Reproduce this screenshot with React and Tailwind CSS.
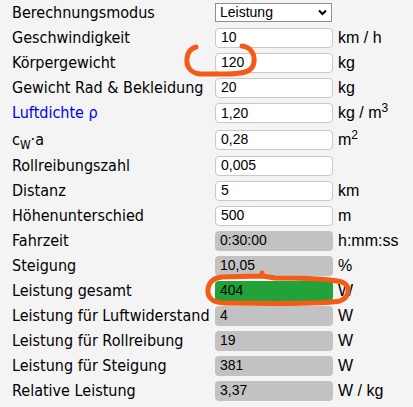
import React from "react";

const rows = [
  { label: "Geschwindigkeit", value: "10", unit: "km / h" },
  { label: "Körpergewicht", value: "120", unit: "kg" },
  { label: "Gewicht Rad & Bekleidung", value: "20", unit: "kg" },
  { label: "Luftdichte ρ", value: "1,20", unit: "kgm3", blue: true, h: "h-[26px]" },
  { label: "cwa", value: "0,28", unit: "m2", h: "h-[27px]" },
  { label: "Rollreibungszahl", value: "0,005", unit: "" },
  { label: "Distanz", value: "5", unit: "km" },
  { label: "Höhenunterschied", value: "500", unit: "m" },
  { label: "Fahrzeit", value: "0:30:00", unit: "h:mm:ss", ro: true },
  { label: "Steigung", value: "10,05", unit: "%", ro: true },
  { label: "Leistung gesamt", value: "404", unit: "W", ro: true, green: true },
  { label: "Leistung für Luftwiderstand", value: "4", unit: "W", ro: true },
  { label: "Leistung für Rollreibung", value: "19", unit: "W", ro: true },
  { label: "Leistung für Steigung", value: "381", unit: "W", ro: true },
  { label: "Relative Leistung", value: "3,37", unit: "W / kg", ro: true },
];

const labelFont = "font-['DejaVu_Sans_Condensed','DejaVu_Sans',sans-serif]";
const inFont = "font-['Liberation_Sans',Arial,sans-serif]";

function Label({ r }) {
  if (r.label === "cwa") {
    return (
      <span>
        c<span className="relative top-[4px] text-[12px]">W</span>·a
      </span>
    );
  }
  return <span className={r.blue ? "text-[#0000ee]" : ""}>{r.label}</span>;
}

function Unit({ u }) {
  if (u === "kgm3")
    return (
      <span>
        kg / m<span className="relative top-[-6px] text-[12px]">3</span>
      </span>
    );
  if (u === "m2")
    return (
      <span>
        m<span className="relative top-[-6px] text-[12px]">2</span>
      </span>
    );
  return <span>{u}</span>;
}

export default function App() {
  return (
    <div className="relative w-[413px] h-[407px] bg-[#f4f4f4] text-black overflow-hidden">
      <div className="flex flex-col pl-[12px]">
        <div className="flex items-center h-[25px]">
          <div className={`w-[203px] text-[16px] ${labelFont}`}>Berechnungsmodus</div>
          <div className={`relative w-[117px] h-[19px] bg-white border border-[#8f8f8f] flex items-center pl-[4px] text-[14px] ${inFont}`}>
            Leistung
            <svg className="absolute right-[4px] top-[5px]" width="9" height="7" viewBox="0 0 9 7">
              <path d="M1 1.5 L4.5 5 L8 1.5" stroke="#000" strokeWidth="2" fill="none" />
            </svg>
          </div>
        </div>
        {rows.map((r, i) => (
          <div key={i} className={`flex items-center ${r.h || "h-[25px]"}`}>
            <div className={`w-[203px] text-[16px] whitespace-nowrap ${labelFont}`}>
              <Label r={r} />
            </div>
            <div
              className={`w-[118px] h-[20px] rounded-[4px] flex items-center pl-[5px] text-[14px] ${inFont} ${
                r.green
                  ? "bg-[#22a33a]"
                  : r.ro
                  ? "bg-[#c2c2c2]"
                  : "bg-white border border-[#c8c8c8]"
              }`}
            >
              {r.value}
            </div>
            <div className={`ml-[5px] text-[16px] whitespace-nowrap ${inFont}`}>
              <Unit u={r.unit} />
            </div>
          </div>
        ))}
      </div>
      <svg className="absolute left-0 top-0 pointer-events-none" width="413" height="407" viewBox="0 0 413 407">
        <path
          d="M242 46 C250 47 255 53 254 62 C253 71 246 74 225 74 L200 74 C190 73 186 66 187 58 C188 51 192 48 196 47"
          stroke="#f45b16"
          strokeWidth="5"
          fill="none"
          strokeLinecap="round"
        />
        <path
          d="M262 276 L275 278 C300 278 330 279 342 282 C351 286 350 297 340 301 C320 305 260 303 225 303 C212 303 207 297 208 289 C209 281 214 278 222 277 L262 276 L262 273"
          stroke="#f45b16"
          strokeWidth="5"
          fill="none"
          strokeLinecap="round"
          strokeLinejoin="round"
        />
      </svg>
    </div>
  );
}
